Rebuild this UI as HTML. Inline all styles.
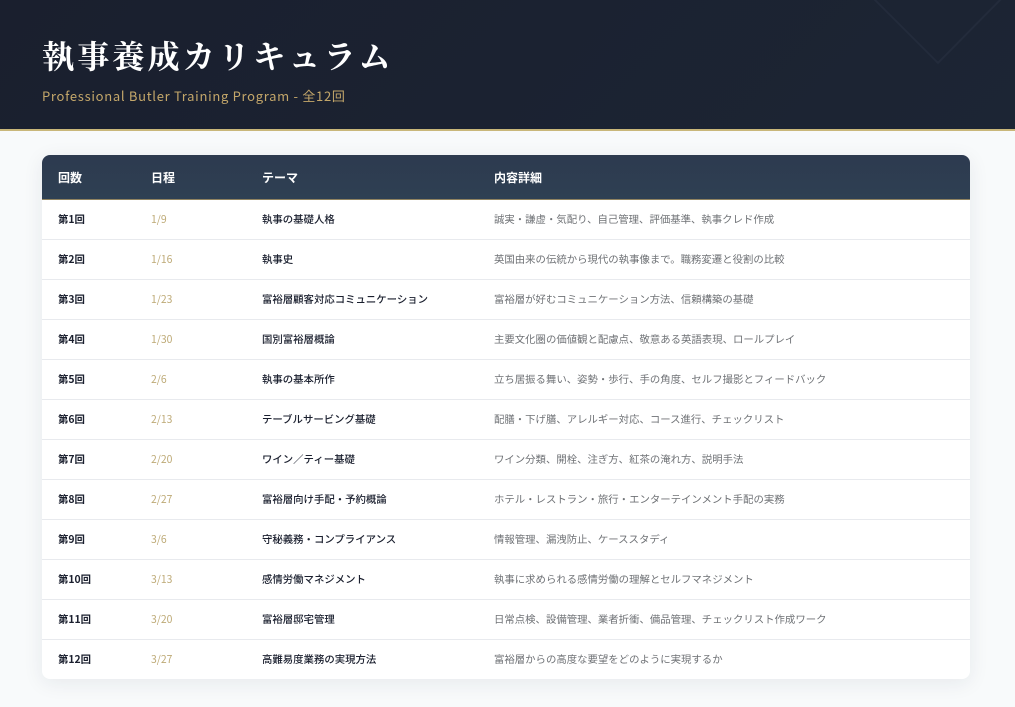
<!DOCTYPE html>
<html lang="ja"><head><meta charset="utf-8"><style>
*{margin:0;padding:0;box-sizing:border-box}
html,body{width:1015px;height:707px;overflow:hidden;background:#f8fafb}
body{font-family:"Noto Sans CJK JP",sans-serif;position:relative}
.hd{position:absolute;left:0;top:0;width:1015px;height:131px;background:linear-gradient(135deg,#1a1f2e,#1c2534 100%);border-bottom:2px solid #c9b77a;overflow:hidden}
.hd svg{position:absolute;left:860px;top:0}
h1{position:absolute;left:42px;top:33px;font:700 32px/44px "Noto Serif CJK JP","Noto Serif CJK SC",serif;letter-spacing:3.2px;color:#fff;white-space:nowrap}
.sub{position:absolute;left:42px;top:86px;font-size:13px;line-height:20px;letter-spacing:.7px;color:#c4a76a;white-space:nowrap}
.card{position:absolute;left:42px;top:155px;width:928px;height:524px;background:#fff;border-radius:8px;box-shadow:0 4px 20px rgba(30,42,58,.08);overflow:hidden}
.th{position:absolute;left:0;top:0;width:928px;height:45px;background:linear-gradient(180deg,#2d3a4f,#2e4053);border-bottom:1px solid #8f8360;color:#fff;font-size:12px;font-weight:700}
.th span,.r span{position:absolute;white-space:nowrap}
.th span{top:14px;line-height:17px}
.r{position:absolute;left:0;width:928px;height:40px;border-bottom:1px solid #e8eaee;font-size:10.4px;line-height:16px}
.r:last-child{border-bottom:0}
.r span{top:11px}
.a{left:16px;font-weight:700;color:#1a1f2e}
.b{left:109px;color:#bda975}
.c{left:220px;font-weight:500;color:#1a1f2e}
.d{left:452px;color:#6f7276}
</style></head><body>
<div class="hd">
<svg width="155" height="70" viewBox="0 0 155 70" fill="none" stroke="#232b3b" stroke-width="2"><path d="M13 -2L78 63L142 -2"/></svg>
<h1>執事養成カリキュラム</h1>
<div class="sub">Professional Butler Training Program - 全12回</div>
</div>
<div class="card">
<div class="th"><span style="left:16px">回数</span><span style="left:109px">日程</span><span style="left:220px">テーマ</span><span style="left:452px">内容詳細</span></div>
<div class="r" style="top:45px"><span class="a">第1回</span><span class="b">1/9</span><span class="c">執事の基礎人格</span><span class="d">誠実・謙虚・気配り、自己管理、評価基準、執事クレド作成</span></div>
<div class="r" style="top:85px"><span class="a">第2回</span><span class="b">1/16</span><span class="c">執事史</span><span class="d">英国由来の伝統から現代の執事像まで。職務変遷と役割の比較</span></div>
<div class="r" style="top:125px"><span class="a">第3回</span><span class="b">1/23</span><span class="c">富裕層顧客対応コミュニケーション</span><span class="d">富裕層が好むコミュニケーション方法、信頼構築の基礎</span></div>
<div class="r" style="top:165px"><span class="a">第4回</span><span class="b">1/30</span><span class="c">国別富裕層概論</span><span class="d">主要文化圏の価値観と配慮点、敬意ある英語表現、ロールプレイ</span></div>
<div class="r" style="top:205px"><span class="a">第5回</span><span class="b">2/6</span><span class="c">執事の基本所作</span><span class="d">立ち居振る舞い、姿勢・歩行、手の角度、セルフ撮影とフィードバック</span></div>
<div class="r" style="top:245px"><span class="a">第6回</span><span class="b">2/13</span><span class="c">テーブルサービング基礎</span><span class="d">配膳・下げ膳、アレルギー対応、コース進行、チェックリスト</span></div>
<div class="r" style="top:285px"><span class="a">第7回</span><span class="b">2/20</span><span class="c">ワイン／ティー基礎</span><span class="d">ワイン分類、開栓、注ぎ方、紅茶の淹れ方、説明手法</span></div>
<div class="r" style="top:325px"><span class="a">第8回</span><span class="b">2/27</span><span class="c">富裕層向け手配・予約概論</span><span class="d">ホテル・レストラン・旅行・エンターテインメント手配の実務</span></div>
<div class="r" style="top:365px"><span class="a">第9回</span><span class="b">3/6</span><span class="c">守秘義務・コンプライアンス</span><span class="d">情報管理、漏洩防止、ケーススタディ</span></div>
<div class="r" style="top:405px"><span class="a">第10回</span><span class="b">3/13</span><span class="c">感情労働マネジメント</span><span class="d">執事に求められる感情労働の理解とセルフマネジメント</span></div>
<div class="r" style="top:445px"><span class="a">第11回</span><span class="b">3/20</span><span class="c">富裕層邸宅管理</span><span class="d">日常点検、設備管理、業者折衝、備品管理、チェックリスト作成ワーク</span></div>
<div class="r" style="top:485px"><span class="a">第12回</span><span class="b">3/27</span><span class="c">高難易度業務の実現方法</span><span class="d">富裕層からの高度な要望をどのように実現するか</span></div>
</div>
</body></html>
